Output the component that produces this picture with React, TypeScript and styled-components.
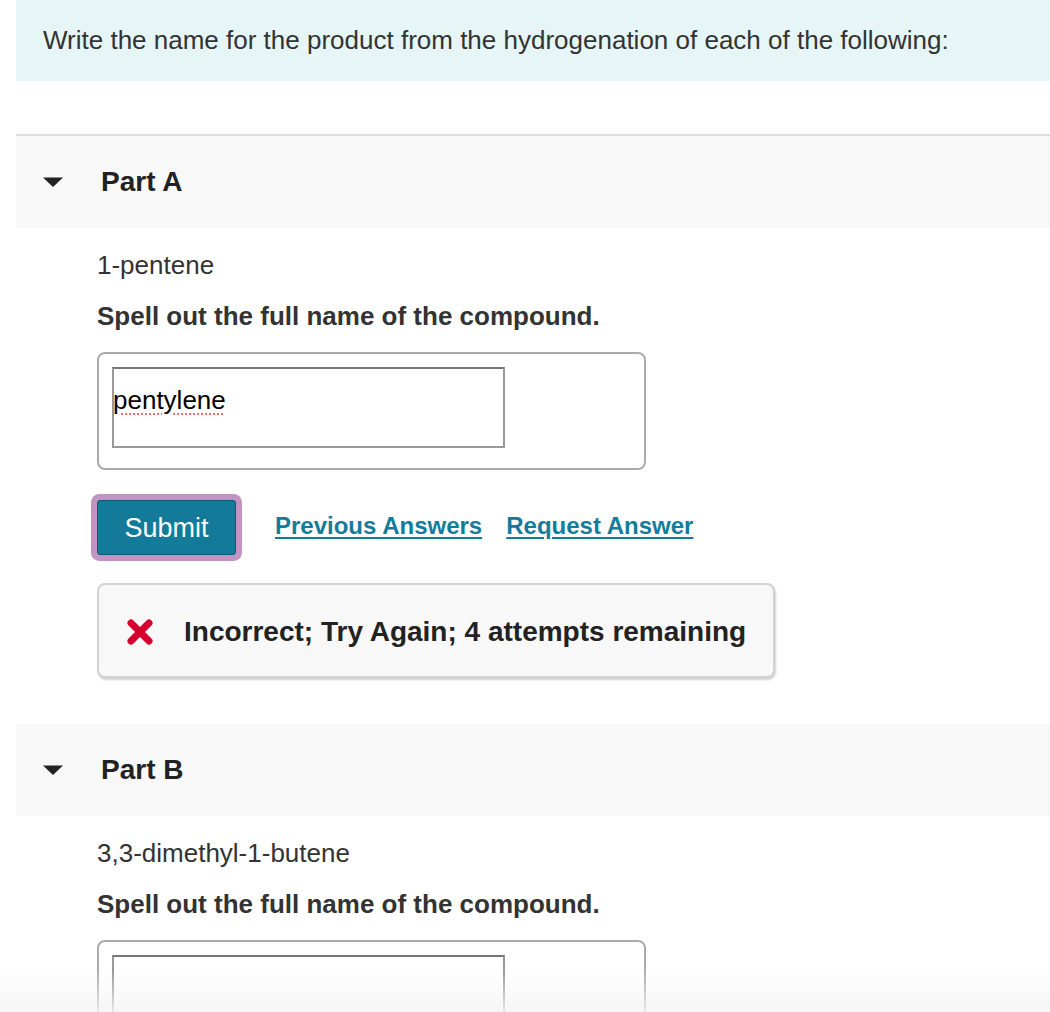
import React from "react";
import styled, { createGlobalStyle } from "styled-components";

const GlobalStyle = createGlobalStyle`
	html, body {
		margin: 0;
		padding: 0;
		background: #fff;
	}
	body {
		font-family: "Liberation Sans", Arial, Helvetica, sans-serif;
		color: #333;
	}
	* {
		box-sizing: border-box;
	}
`;

const Page = styled.main`
	padding-left: 16px;
	padding-bottom: 80px;
`;

const Banner = styled.div`
	height: 81px;
	background: #e6f6f7;
	padding-left: 27px;
	display: flex;
	align-items: center;
	font-size: 26px;
	color: #333;
	margin-bottom: 53px;
`;

const Part = styled.section<{ $first?: boolean }>`
	border-top: ${(p) => (p.$first ? "2px solid #dedede" : "none")};
`;

const PartHeader = styled.div`
	height: 92px;
	background: #f8f8f8;
	display: flex;
	align-items: center;
	padding-left: 26px;

	h2 {
		margin: 0 0 0 37px;
		font-size: 28px;
		font-weight: 700;
		color: #222;
	}
`;

const PartBody = styled.div`
	padding: 22px 0 46px 81px;
`;

const Prompt = styled.p`
	margin: 0;
	font-size: 26px;
	line-height: 30px;
	color: #333;
`;

const Instruction = styled.p`
	margin: 21px 0 0;
	font-size: 26px;
	line-height: 30px;
	font-weight: 700;
	color: #333;
`;

const AnswerBox = styled.div`
	margin-top: 21px;
	width: 549px;
	height: 118px;
	border: 2px solid #ababab;
	border-radius: 8px;
	padding: 13px;
`;

const AnswerInput = styled.input<{ $misspelt?: boolean }>`
	display: block;
	width: 393px;
	height: 81px;
	border: 2px solid #999;
	border-top-color: #767676;
	border-radius: 0;
	padding: 0 0 14px 0;
	text-indent: -1px;
	font-family: "Liberation Sans", Arial, sans-serif;
	font-size: 26px;
	color: #000;
	background: #fff;
	outline: none;
	text-decoration-line: ${(p) => (p.$misspelt ? "underline" : "none")};
	text-decoration-style: dotted;
	text-decoration-color: #f36b6b;
	text-decoration-thickness: 2px;
	text-underline-offset: 4px;
`;

const ActionRow = styled.div`
	margin-top: 30px;
	display: flex;
	align-items: center;
	gap: 39px;
`;

const SubmitButton = styled.button`
	width: 139px;
	height: 55px;
	background: #147a99;
	border: 1px solid #0b5b72;
	border-radius: 3px;
	box-shadow: 0 0 0 6px #c394c3;
	color: #fff;
	font-family: "Liberation Sans", Arial, sans-serif;
	font-size: 27px;
	padding: 2px 0 0;
	cursor: pointer;
`;

const Links = styled.div`
	display: flex;
	gap: 24px;
	margin-top: -4px;
`;

const ActionLink = styled.a`
	font-size: 24px;
	font-weight: 700;
	color: #167b9b;
	text-decoration: underline;
	text-underline-offset: 3px;
	cursor: pointer;
`;

const Feedback = styled.div`
	margin-top: 28px;
	width: 678px;
	height: 95px;
	background: #f8f8f8;
	border: 2px solid #d2d2d2;
	border-radius: 8px;
	box-shadow: 1px 2px 2px rgba(0, 0, 0, 0.18);
	display: flex;
	align-items: center;
	padding: 3px 0 0 27px;
	gap: 30px;

	span {
		font-size: 28px;
		font-weight: 700;
		color: #222;
	}
`;

const BottomFade = styled.div`
	position: fixed;
	left: 0;
	right: 0;
	bottom: 0;
	height: 42px;
	pointer-events: none;
	background: linear-gradient(rgba(244, 244, 244, 0), rgba(244, 244, 244, 0.85));
`;

const Caret = () => (
	<svg width="22" height="12" viewBox="0 0 22 12">
		<path d="M1 1.5 L21 1.5 L11 11 Z" fill="#222" />
	</svg>
);

const CrossIcon = () => (
	<svg width="28" height="28" viewBox="0 0 28 28">
		<path
			d="M5 5 L23 23 M23 5 L5 23"
			stroke="#d6002f"
			strokeWidth="7"
			strokeLinecap="round"
		/>
	</svg>
);

type PartData = {
	label: string;
	compound: string;
	answer: string;
	feedback?: string;
};

const parts: PartData[] = [
	{
		label: "Part A",
		compound: "1-pentene",
		answer: "pentylene",
		feedback: "Incorrect; Try Again; 4 attempts remaining",
	},
	{
		label: "Part B",
		compound: "3,3-dimethyl-1-butene",
		answer: "",
	},
];

const App = () => {
	return (
		<Page>
			<GlobalStyle />
			<Banner>Write the name for the product from the hydrogenation of each of the following:</Banner>

			{parts.map((part, i) => (
				<Part key={part.label} $first={i === 0}>
					<PartHeader>
						<Caret />
						<h2>{part.label}</h2>
					</PartHeader>
					<PartBody>
						<Prompt>{part.compound}</Prompt>
						<Instruction>Spell out the full name of the compound.</Instruction>
						<AnswerBox>
							<AnswerInput
								type="text"
								defaultValue={part.answer}
								$misspelt={part.answer !== ""}
								spellCheck={false}
							/>
						</AnswerBox>
						{part.feedback && (
							<>
								<ActionRow>
									<SubmitButton>Submit</SubmitButton>
									<Links>
										<ActionLink>Previous Answers</ActionLink>
										<ActionLink>Request Answer</ActionLink>
									</Links>
								</ActionRow>
								<Feedback>
									<CrossIcon />
									<span>{part.feedback}</span>
								</Feedback>
							</>
						)}
					</PartBody>
				</Part>
			))}
			<BottomFade />
		</Page>
	);
};

export default App;
